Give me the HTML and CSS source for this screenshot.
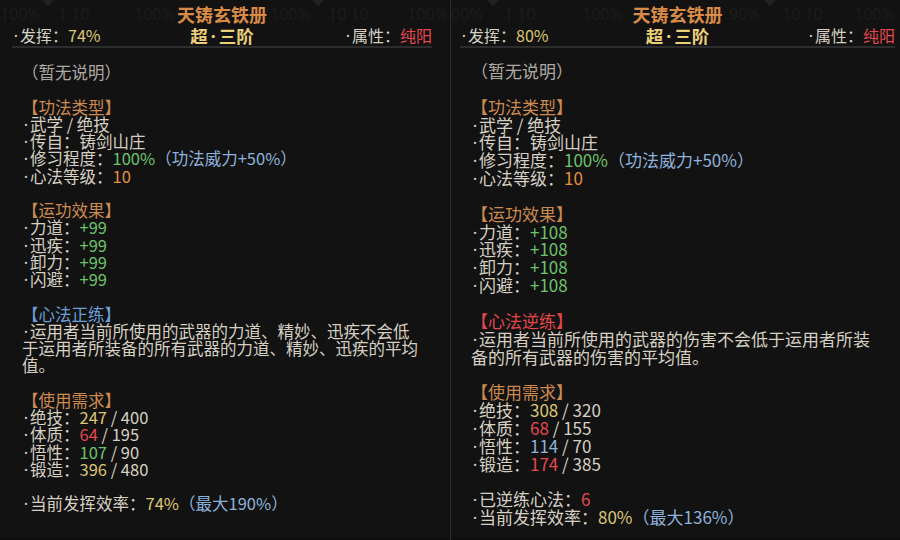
FILE: index.html
```html
<!DOCTYPE html>
<html lang="zh-CN">
<head>
<meta charset="utf-8">
<link rel="stylesheet" href="styles.css">
</head>
<body>
<div class="wrap">
  <section class="panel p-left">
    <header class="head">
      <div class="ghost">
        <span class="g" style="left:0px">100%</span>
        <span class="g" style="left:58px">1 10</span>
        <span class="g" style="left:134px">100%</span>
        <span class="g" style="left:270px">100%</span>
        <span class="g" style="left:328px">10 10</span>
        <span class="g" style="left:407px">100%</span>
        <span class="tri" style="left:42px"></span>
        <span class="tri" style="left:312px"></span>
      </div>
      <div class="stat"><span class="d">·</span>发挥：<span class="yel">74%</span></div>
      <div class="titles">
        <div class="name">天铸玄铁册</div>
        <div class="tier">超<span class="td">·</span>三阶</div>
      </div>
      <div class="stat stat-r"><span class="d">·</span>属性：<span class="red">纯阳</span></div>
    </header>
    <div class="body">
      <div class="l note">（暂无说明）</div>
      <div class="gap"></div>
      <div class="l sec">【功法类型】</div>
      <div class="l"><span class="d">·</span>武学 / 绝技</div>
      <div class="l"><span class="d">·</span>传自：铸剑山庄</div>
      <div class="l"><span class="d">·</span>修习程度：<span class="grn">100%</span><span class="blu">（功法威力+50%）</span></div>
      <div class="l"><span class="d">·</span>心法等级：<span class="org">10</span></div>
      <div class="gap"></div>
      <div class="l sec">【运功效果】</div>
      <div class="l"><span class="d">·</span>力道：<span class="grn">+99</span></div>
      <div class="l"><span class="d">·</span>迅疾：<span class="grn">+99</span></div>
      <div class="l"><span class="d">·</span>卸力：<span class="grn">+99</span></div>
      <div class="l"><span class="d">·</span>闪避：<span class="grn">+99</span></div>
      <div class="gap"></div>
      <div class="l sec sec-blue">【心法正练】</div>
      <div class="l"><span class="d">·</span>运用者当前所使用的武器的力道、精妙、迅疾不会低</div>
      <div class="l">于运用者所装备的所有武器的力道、精妙、迅疾的平均</div>
      <div class="l">值。</div>
      <div class="gap"></div>
      <div class="l sec">【使用需求】</div>
      <div class="l"><span class="d">·</span>绝技：<span class="yel">247</span> / 400</div>
      <div class="l"><span class="d">·</span>体质：<span class="red">64</span> / 195</div>
      <div class="l"><span class="d">·</span>悟性：<span class="grn">107</span> / 90</div>
      <div class="l"><span class="d">·</span>锻造：<span class="yel">396</span> / 480</div>
      <div class="gap"></div>
      <div class="l"><span class="d">·</span>当前发挥效率：<span class="yel">74%</span><span class="blu">（最大190%）</span></div>
    </div>
  </section>
  <div class="divider"></div>
  <section class="panel p-right">
    <header class="head">
      <div class="ghost">
        <span class="g" style="left:0px">00%</span>
        <span class="g" style="left:53px">1 10</span>
        <span class="g" style="left:131px">100%</span>
        <span class="g" style="left:278px">90%</span>
        <span class="g" style="left:331px">10 10</span>
        <span class="g" style="left:403px">100%</span>
        <span class="tri" style="left:36px"></span>
        <span class="tri" style="left:313px"></span>
      </div>
      <div class="stat"><span class="d">·</span>发挥：<span class="yel">80%</span></div>
      <div class="titles">
        <div class="name">天铸玄铁册</div>
        <div class="tier">超<span class="td">·</span>三阶</div>
      </div>
      <div class="stat stat-r"><span class="d">·</span>属性：<span class="red">纯阳</span></div>
    </header>
    <div class="body">
      <div class="l note">（暂无说明）</div>
      <div class="gap"></div>
      <div class="l sec">【功法类型】</div>
      <div class="l"><span class="d">·</span>武学 / 绝技</div>
      <div class="l"><span class="d">·</span>传自：铸剑山庄</div>
      <div class="l"><span class="d">·</span>修习程度：<span class="grn">100%</span><span class="blu">（功法威力+50%）</span></div>
      <div class="l"><span class="d">·</span>心法等级：<span class="org">10</span></div>
      <div class="gap"></div>
      <div class="l sec">【运功效果】</div>
      <div class="l"><span class="d">·</span>力道：<span class="grn">+108</span></div>
      <div class="l"><span class="d">·</span>迅疾：<span class="grn">+108</span></div>
      <div class="l"><span class="d">·</span>卸力：<span class="grn">+108</span></div>
      <div class="l"><span class="d">·</span>闪避：<span class="grn">+108</span></div>
      <div class="gap"></div>
      <div class="l sec sec-red">【心法逆练】</div>
      <div class="l"><span class="d">·</span>运用者当前所使用的武器的伤害不会低于运用者所装</div>
      <div class="l">备的所有武器的伤害的平均值。</div>
      <div class="gap"></div>
      <div class="l sec">【使用需求】</div>
      <div class="l"><span class="d">·</span>绝技：<span class="yel">308</span> / 320</div>
      <div class="l"><span class="d">·</span>体质：<span class="red">68</span> / 155</div>
      <div class="l"><span class="d">·</span>悟性：<span class="blu">114</span> / 70</div>
      <div class="l"><span class="d">·</span>锻造：<span class="red">174</span> / 385</div>
      <div class="gap"></div>
      <div class="l"><span class="d">·</span>已逆练心法：<span class="red">6</span></div>
      <div class="l"><span class="d">·</span>当前发挥效率：<span class="yel">80%</span><span class="blu">（最大136%）</span></div>
    </div>
  </section>
</div>
</body>
</html>
```
FILE: styles.css
```css
* { box-sizing: border-box; }
html, body {
  margin: 0;
  padding: 0;
  background: #0d0d0d;
}
body {
  width: 900px;
  height: 540px;
  overflow: hidden;
  font-family: "Noto Sans CJK SC", "Noto Sans", sans-serif;
  color: #d6d0c3;
}
.wrap {
  display: flex;
  width: 900px;
  height: 540px;
}
.panel {
  background: #121212;
  height: 537px;
}
.p-left { width: 450px; padding: 0 18px 0 12px; }
.p-right { width: 449px; padding: 0 5px 0 9px; }
.divider {
  width: 1px;
  height: 540px;
  background: #2c2c2c;
}
.head {
  position: relative;
  display: grid;
  grid-template-columns: 1fr auto 1fr;
  padding-top: 4px;
  border-bottom: 2px solid #2d2d2d;
}
.ghost {
  position: absolute;
  left: -12px;
  right: -18px;
  top: 0;
  height: 26px;
  overflow: hidden;
  z-index: 0;
}
.p-right .ghost { left: -9px; right: -5px; }
.g {
  position: absolute;
  top: 4px;
  font-size: 16px;
  line-height: 20px;
  color: #1d1d1d;
  font-family: "Noto Sans", sans-serif;
}
.tri {
  position: absolute;
  top: 0;
  width: 0;
  height: 0;
  border-left: 6px solid transparent;
  border-right: 6px solid transparent;
  border-top: 6px solid #222222;
}
.d, .td {
  display: inline-block;
  line-height: 0;
  text-align: center;
  font-family: "Noto Sans", sans-serif;
}
.d { width: 8px; }
.td { width: 11px; }
.stat {
  position: relative;
  z-index: 1;
  align-self: end;
  font-size: 16px;
  line-height: 21px;
  white-space: nowrap;
}
.stat-r { text-align: right; }
.titles {
  position: relative;
  z-index: 1;
  text-align: center;
}
.name {
  font-size: 18px;
  line-height: 21px;
  font-weight: 700;
  color: #d88b47;
}
.tier {
  font-size: 17.5px;
  line-height: 21px;
  font-weight: 700;
  color: #ebcf78;
}
.body {
  font-size: 16.5px;
  line-height: 17.25px;
  padding: 16px 0 0 10px;
  white-space: nowrap;
}
.p-right .body {
  font-size: 17px;
  line-height: 17.85px;
  padding: 14px 0 0 11px;
}
.l { height: 17.25px; }
.p-right .l { height: 17.85px; }
.gap { height: 17.25px; }
.p-right .gap { height: 17.85px; }
.note { color: #aeaaa3; }
.sec { color: #cd8a4f; }
.sec-blue { color: #6c9fd9; }
.sec-red { color: #e2474d; }
.grn { color: #6cc46a; }
.blu { color: #8db2dc; }
.org { color: #e88f3f; }
.yel { color: #dcc672; }
.red { color: #e5484e; }
```
